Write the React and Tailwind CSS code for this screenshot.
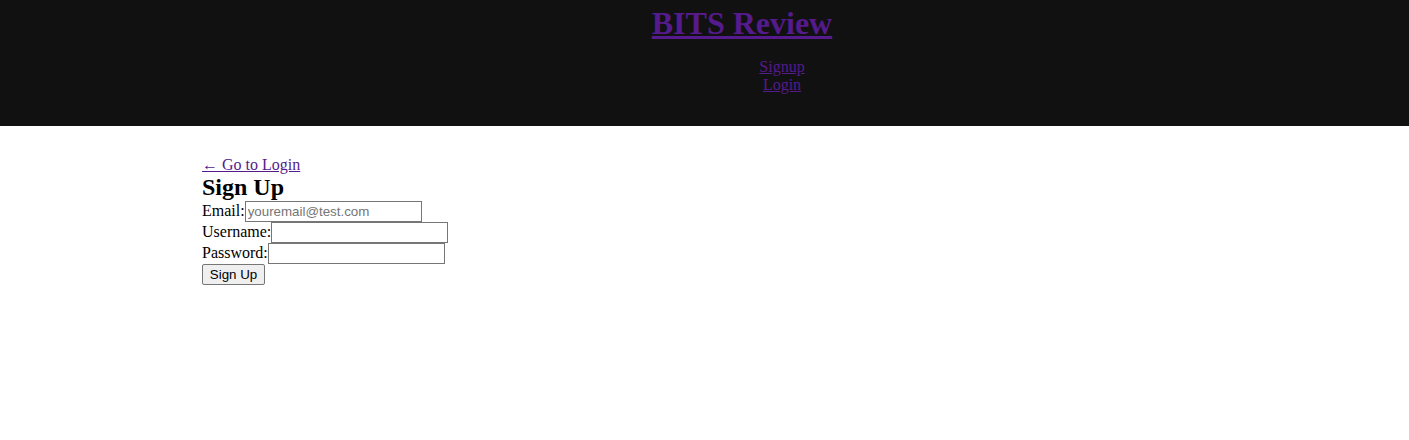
export default function App() {
  const serif = { fontFamily: '"Liberation Serif", "Times New Roman", serif' };
  const inputCls =
    "align-baseline w-[177px] h-[21px] border border-[#767676] bg-white px-[2px] py-[1px] text-[13.33px] text-black placeholder:text-[#757575] font-['Liberation_Sans',Arial,sans-serif] outline-none";
  return (
    <div className="min-h-[440px] bg-white text-black text-[16px]" style={serif}>
      <header className="bg-[#111111] h-[126px] pt-[5px] pl-[75px] text-center">
        <h1 className="m-0 text-[32px] font-bold leading-[37px]">
          <a href="#" className="text-[#551A8B] underline">BITS Review</a>
        </h1>
        <nav className="mt-[16px] pl-[80px] leading-[18px]">
          <div>
            <a href="#" className="text-[#551A8B] underline">Signup</a>
          </div>
          <div>
            <a href="#" className="text-[#551A8B] underline">Login</a>
          </div>
        </nav>
      </header>
      <main className="pl-[202px] pt-[30px]">
        <div className="leading-[18px]">
          <a href="#" className="text-[#551A8B] underline">← Go to Login</a>
        </div>
        <h2 className="m-0 text-[24px] font-bold leading-[27px]">Sign Up</h2>
        <div className="h-[21px] leading-[18px] whitespace-nowrap">
          Email:<input className={inputCls} placeholder="youremail@test.com" />
        </div>
        <div className="h-[21px] leading-[18px] whitespace-nowrap">
          Username:<input className={inputCls} />
        </div>
        <div className="h-[21px] leading-[18px] whitespace-nowrap">
          Password:<input className={inputCls} />
        </div>
        <button className="block w-[63px] h-[21px] border border-[#767676] bg-[#efefef] text-[13.33px] text-black font-['Liberation_Sans',Arial,sans-serif] leading-none rounded-[2px]">
          Sign Up
        </button>
      </main>
    </div>
  );
}
